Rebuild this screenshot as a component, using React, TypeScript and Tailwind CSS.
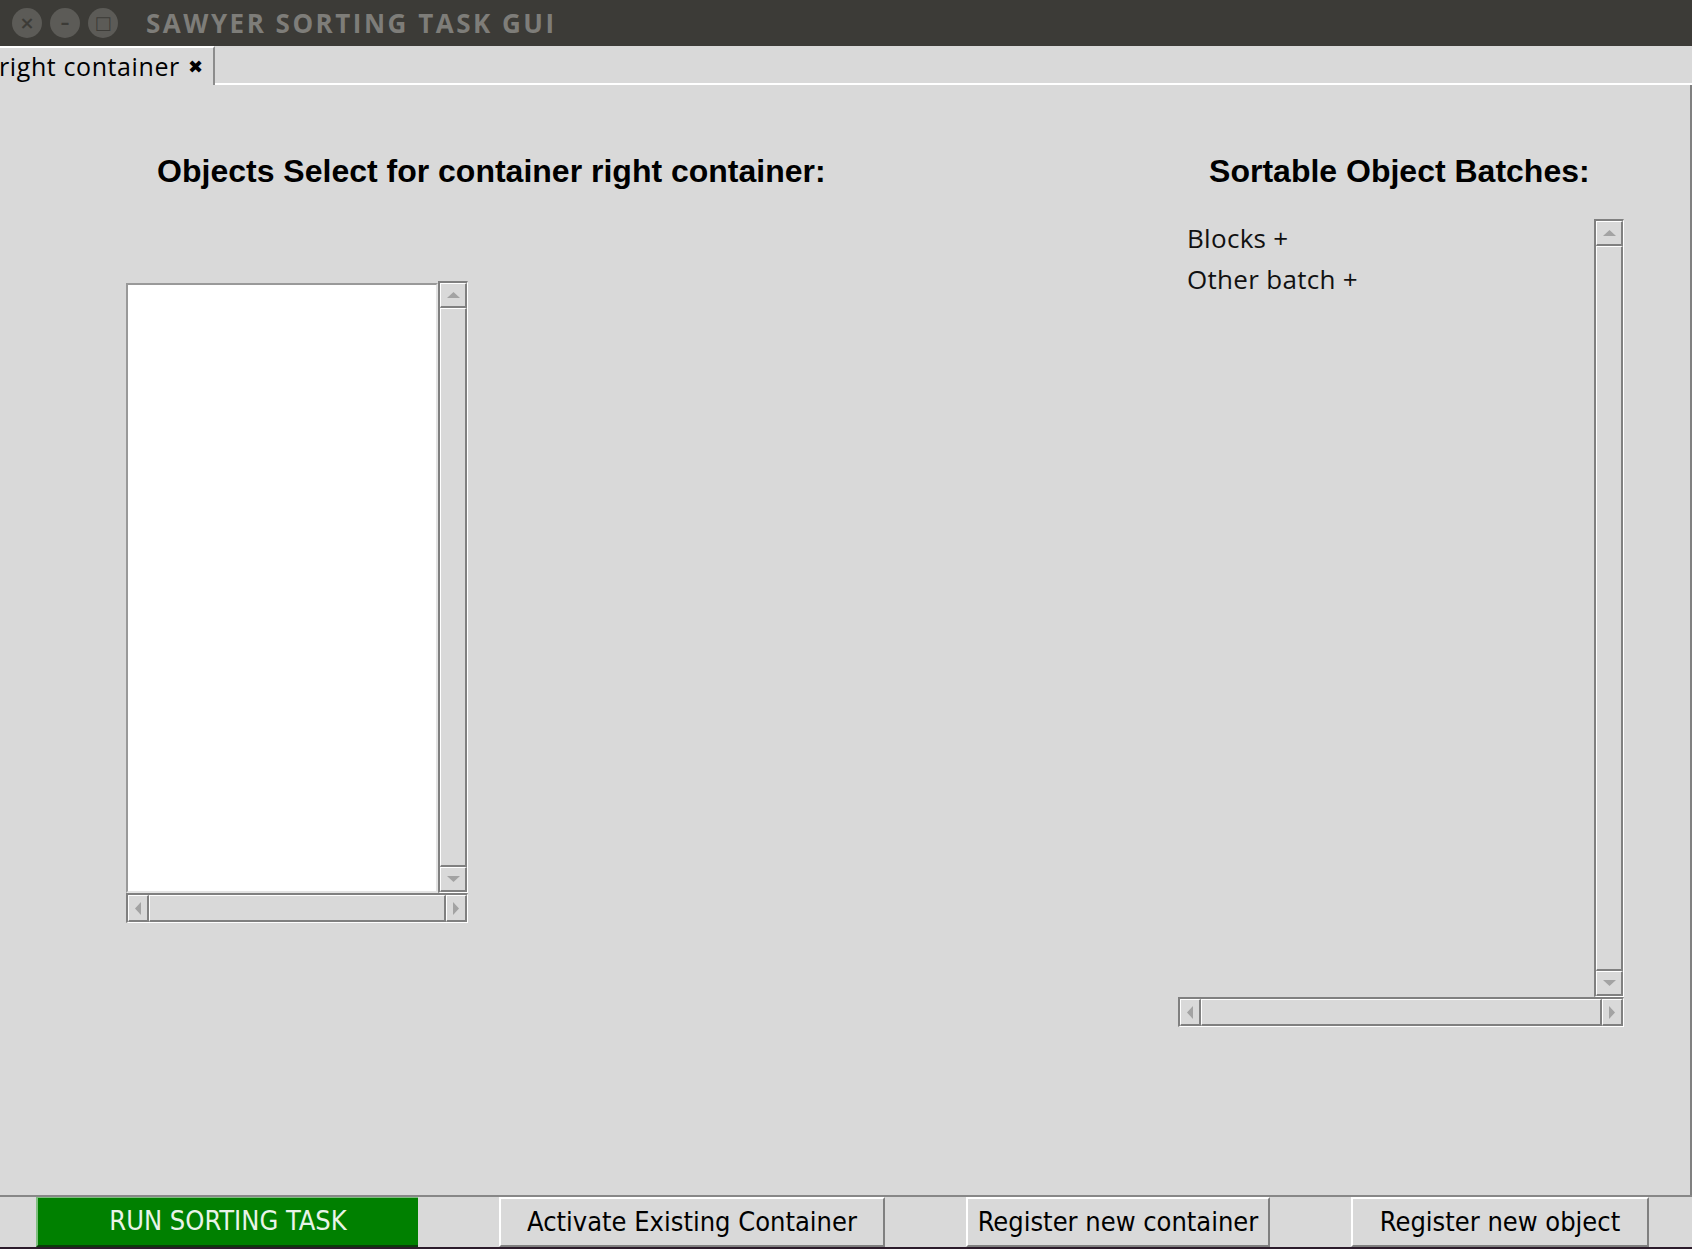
import React from "react";

const ArrowUp = () => (
  <svg width="13" height="6" viewBox="0 0 13 6">
    <polygon points="6.5,0 13,6 0,6" fill="#a3a3a3" />
  </svg>
);

const ArrowDown = () => (
  <svg width="13" height="6" viewBox="0 0 13 6">
    <polygon points="0,0 13,0 6.5,6" fill="#a3a3a3" />
  </svg>
);

const ArrowLeft = () => (
  <svg width="6" height="13" viewBox="0 0 6 13">
    <polygon points="0,6.5 6,0 6,13" fill="#a3a3a3" />
  </svg>
);

const ArrowRight = () => (
  <svg width="6" height="13" viewBox="0 0 6 13">
    <polygon points="0,0 6,6.5 0,13" fill="#a3a3a3" />
  </svg>
);

const raised =
  "border-t border-l border-t-white border-l-white border-r-2 border-b-2 border-r-[#808080] border-b-[#808080]";
const sunken =
  "border-t-2 border-l-2 border-t-[#808080] border-l-[#808080] border-r border-b border-r-white border-b-white";

const VScroll = ({ height }: { height: number }) => (
  <div className={`flex flex-col w-[30px] ${sunken}`} style={{ height }}>
    <div className={`h-[25px] flex items-center justify-center ${raised}`}>
      <ArrowUp />
    </div>
    <div className={`flex-1 ${raised}`} />
    <div className={`h-[25px] flex items-center justify-center ${raised}`}>
      <ArrowDown />
    </div>
  </div>
);

const HScroll = ({ width }: { width: number }) => (
  <div className={`flex flex-row h-[30px] ${sunken}`} style={{ width }}>
    <div className={`w-[21px] flex items-center justify-center ${raised}`}>
      <ArrowLeft />
    </div>
    <div className={`flex-1 ${raised}`} />
    <div className={`w-[21px] flex items-center justify-center ${raised}`}>
      <ArrowRight />
    </div>
  </div>
);

const buttonBase =
  "h-full flex items-center justify-center text-[27px] font-['DejaVu_Sans_Condensed','DejaVu_Sans',sans-serif] [font-stretch:condensed]";

export default function App() {
  return (
    <div className="w-[1692px] h-[1249px] flex flex-col bg-[#d9d9d9] overflow-hidden">
      {/* title bar */}
      <div className="h-[46px] shrink-0 bg-[#3c3b37] flex items-center">
        <div className="flex items-center gap-[8px] pl-[12px]">
          {["×", "–", "□"].map((g, i) => (
            <div
              key={i}
              className="w-[30px] h-[30px] rounded-full bg-[#5c5b57] flex items-center justify-center text-[#3c3b37] text-[18px] leading-none font-bold font-['DejaVu_Sans',sans-serif]"
            >
              {g}
            </div>
          ))}
        </div>
        <div className="ml-[28px] text-[#7e7d79] text-[26px] font-bold font-['Open_Sans',sans-serif] tracking-[2.5px]">
          SAWYER SORTING TASK GUI
        </div>
      </div>

      {/* tab bar */}
      <div className="h-[39px] shrink-0 flex">
        <div className="w-[215px] h-full border-t-2 border-t-white border-r-2 border-r-[#8c8c8c] flex items-center">
          <span className="text-[25px] text-black font-['Open_Sans',sans-serif] tracking-[0.6px] -ml-[1px]">
            right container
          </span>
          <span className="ml-[8px] text-[18px] font-bold text-black font-['DejaVu_Sans',sans-serif]">
            ✖
          </span>
        </div>
        <div className="flex-1 border-b-2 border-b-white" />
      </div>

      {/* main frame */}
      <div className="flex-1 border-r-2 border-r-[#808080] flex flex-col">
        <div className="flex pt-[69px] font-['Liberation_Sans',Arial,sans-serif] font-bold text-[32px] leading-[34px] text-black">
          <div className="w-[984px] text-center">
            Objects Select for container right container:
          </div>
          <div className="w-[582px] ml-[126px] text-center">
            Sortable Object Batches:
          </div>
        </div>

        <div className="flex items-start">
          {/* left list */}
          <div className="ml-[126px] mt-[93px] flex flex-col">
            <div className="flex items-start">
              <div className="mt-[2px] w-[312px] h-[610px] bg-white border-t-2 border-l-2 border-t-[#999999] border-l-[#999999] border-r-2 border-b-2 border-r-[#e3e3e3] border-b-[#e3e3e3]" />
              <VScroll height={612} />
            </div>
            <HScroll width={342} />
          </div>

          {/* right list */}
          <div className="ml-[710px] mt-[31px] flex flex-col">
            <div className="flex items-start">
              <div className="w-[416px] h-[778px] pl-[9px] -mt-[1px] font-['Open_Sans',sans-serif] text-[26px] leading-[41px] tracking-[0.3px] text-[#111]">
                <div>Blocks +</div>
                <div>Other batch +</div>
              </div>
              <VScroll height={778} />
            </div>
            <HScroll width={446} />
          </div>
        </div>
      </div>

      {/* bottom buttons */}
      <div className="h-[2px] shrink-0 bg-[#878787]" />
      <div className="h-[50px] shrink-0 flex pl-[36px] gap-[81px]">
        <div
          className={`${buttonBase} w-[382px] bg-[#008000] text-[#e8f4e8] border-t border-l-2 border-t-[#7fbf7f] border-l-[#7fbf7f] border-b-2 border-b-[#0b3d0b]`}
        >
          RUN SORTING TASK
        </div>
        <div
          className={`${buttonBase} w-[386px] text-black border-t-2 border-l-2 border-t-white border-l-white border-r-2 border-b-2 border-r-[#808080] border-b-[#808080]`}
        >
          Activate Existing Container
        </div>
        <div
          className={`${buttonBase} w-[304px] text-black border-t-2 border-l-2 border-t-white border-l-white border-r-2 border-b-2 border-r-[#808080] border-b-[#808080]`}
        >
          Register new container
        </div>
        <div
          className={`${buttonBase} w-[298px] text-black border-t-2 border-l-2 border-t-white border-l-white border-r-2 border-b-2 border-r-[#808080] border-b-[#808080]`}
        >
          Register new object
        </div>
      </div>
      <div className="h-[2px] shrink-0 bg-[#2c1b2b]" />
    </div>
  );
}
